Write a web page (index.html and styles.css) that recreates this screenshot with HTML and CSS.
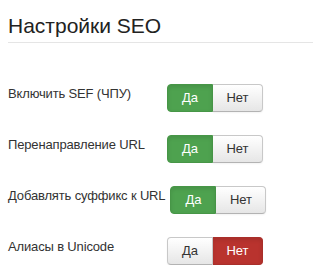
FILE: index.html
```html
<!DOCTYPE html>
<html lang="ru">
<head>
    <meta charset="UTF-8">
    <meta name="viewport" content="width=device-width, initial-scale=1.0">
    <title>Настройки SEO</title>
    <link rel="stylesheet" href="styles.css">
</head>
<body>
    <div class="panel">
        <h2>Настройки SEO</h2>
        <div class="form">
            <div class="row">
                <label class="control-label">Включить SEF (ЧПУ)</label>
                <div class="btn-group">
                    <span class="btn yes active-yes">Да</span>
                    <span class="btn no">Нет</span>
                </div>
            </div>
            <div class="row">
                <label class="control-label">Перенаправление URL</label>
                <div class="btn-group">
                    <span class="btn yes active-yes">Да</span>
                    <span class="btn no">Нет</span>
                </div>
            </div>
            <div class="row">
                <label class="control-label">Добавлять суффикс к URL</label>
                <div class="btn-group">
                    <span class="btn yes active-yes">Да</span>
                    <span class="btn no">Нет</span>
                </div>
            </div>
            <div class="row">
                <label class="control-label">Алиасы в Unicode</label>
                <div class="btn-group">
                    <span class="btn yes">Да</span>
                    <span class="btn no active-no">Нет</span>
                </div>
            </div>
        </div>
    </div>
</body>
</html>
```

FILE: styles.css
```css
/* Общие стили */
body {
    font-family: "Liberation Sans", Arial, sans-serif;
    background-color: #fff;
    margin: 0;
    color: #333;
}

.panel {
    padding: 14px 0 0 8px;
}

h2 {
    margin: 0;
    font-size: 21px;
    font-weight: normal;
    line-height: 24px;
    color: #222;
    padding-bottom: 4px;
    border-bottom: 1px solid #e5e5e5;
}

.form {
    padding-top: 41px;
}

.row {
    display: flex;
    align-items: flex-start;
    gap: 5px;
    margin-bottom: 23px;
}

.row:last-child {
    margin-bottom: 0;
}

.control-label {
    min-width: 154px;
    font-size: 13px;
    line-height: 18px;
    letter-spacing: -0.15px;
    padding-top: 1px;
}

/* Переключатель Да / Нет */
.btn-group {
    display: flex;
}

.btn {
    font-size: 13px;
    line-height: 18px;
    padding: 4px 0;
    text-align: center;
    color: #333;
    background: linear-gradient(#ffffff, #e6e6e6);
    border: 1px solid #c8c8c8;
    border-bottom-color: #b3b3b3;
    box-shadow: inset 0 1px 0 rgba(255, 255, 255, 0.2), 0 1px 2px rgba(0, 0, 0, 0.05);
}

.btn.yes {
    width: 44px;
    border-radius: 4px 0 0 4px;
}

.btn.no {
    width: 49px;
    border-left: none;
    border-radius: 0 4px 4px 0;
}

.active-yes {
    color: #fff;
    background: #4ea24f;
    border-color: #479647;
    box-shadow: inset 0 2px 4px rgba(0, 0, 0, 0.1);
}

.active-no {
    color: #fff;
    background: #b9332e;
    border-color: #a92f2a;
    box-shadow: inset 0 2px 4px rgba(0, 0, 0, 0.1);
}
```
